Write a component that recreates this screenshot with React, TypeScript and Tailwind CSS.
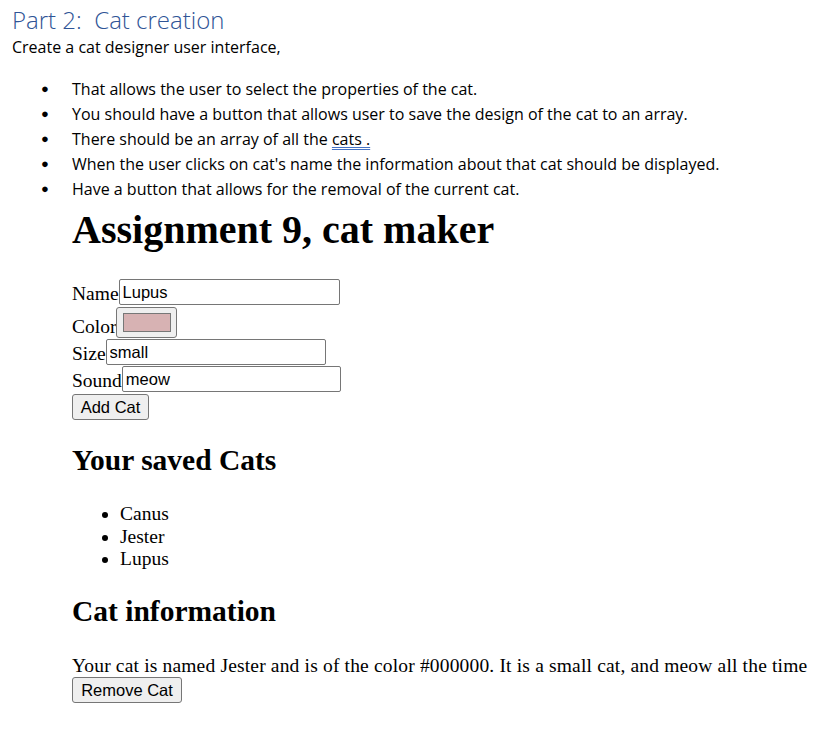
export default function App() {
  const bullets = [
    'That allows the user to select the properties of the cat.',
    'You should have a button that allows user to save the design of the cat to an array.',
    null,
    "When the user clicks on cat's name the information about that cat should be displayed.",
    'Have a button that allows for the removal of the current cat.',
  ]
  const cats = ['Canus', 'Jester', 'Lupus']

  const word = { fontFamily: '"Open Sans", "Noto Sans", sans-serif' }
  const serif = { fontFamily: '"Liberation Serif", "Times New Roman", serif' }
  const sans = { fontFamily: '"Liberation Sans", Arial, sans-serif' }

  return (
    <div className="min-h-screen w-[838px] bg-white text-black overflow-hidden">
      {/* document part */}
      <div style={word}>
        <h1 className="pl-[12px] pt-[5px] text-[24px] leading-[30px] font-light text-[#2f5496]">
          Part 2:&nbsp; Cat creation
        </h1>
        <p className="pl-[12px] text-[16px] leading-[24px]">Create a cat designer user interface,</p>
        <ul className="mt-[17px]">
          {bullets.map((b, i) => (
            <li key={i} className="flex items-center h-[25px] text-[16px]">
              <span className="w-[72px] pl-[41px] text-[13px]">●</span>
              {b ?? (
                <span>
                  There should be an array of all the{' '}
                  <span className="underline decoration-double decoration-[#4472c4] underline-offset-2">cats .</span>
                </span>
              )}
            </li>
          ))}
        </ul>
      </div>

      {/* browser part */}
      <div className="pl-[72px] mt-[6px]" style={serif}>
        <h1 className="text-[40px] leading-[46px] font-bold">Assignment 9, cat maker</h1>

        <div className="mt-[25px] text-[19.5px]">
          <div className="flex items-end h-[27px]">
            <span className="leading-[22px]">Name</span>
            <input
              readOnly
              value="Lupus"
              style={sans}
              className="w-[221px] h-[26px] border border-[#767676] rounded-[2px] px-[3px] text-[16.5px] outline-none"
            />
          </div>
          <div className="flex items-end h-[33px]">
            <span className="leading-[22px]">Color</span>
            <div className="w-[61px] h-[31px] bg-[#efefef] border border-[#767676] rounded-[3px] flex items-center justify-center">
              <div className="w-[48px] h-[19px] bg-[#d7b2b3] border border-[#777]" />
            </div>
          </div>
          <div className="flex items-end h-[27px]">
            <span className="leading-[22px]">Size</span>
            <input
              readOnly
              value="small"
              style={sans}
              className="w-[220px] h-[26px] border border-[#767676] rounded-[2px] px-[3px] text-[16.5px] outline-none"
            />
          </div>
          <div className="flex items-end h-[27px]">
            <span className="leading-[22px]">Sound</span>
            <input
              readOnly
              value="meow"
              style={sans}
              className="w-[219px] h-[26px] border border-[#767676] rounded-[2px] px-[3px] text-[16.5px] outline-none"
            />
          </div>
          <button
            style={sans}
            className="h-[26px] w-[77px] bg-[#efefef] border border-[#767676] rounded-[3px] text-[16.5px] leading-none"
          >
            Add Cat
          </button>
        </div>

        <h2 className="mt-[22px] text-[29.5px] leading-[34px] font-bold">Your saved Cats</h2>
        <ul className="mt-[26px] pl-[48px] list-disc text-[19.5px] leading-[22.5px]">
          {cats.map((c) => (
            <li key={c}>{c}</li>
          ))}
        </ul>

        <h2 className="mt-[23px] text-[29.5px] leading-[34px] font-bold">Cat information</h2>
        <p className="mt-[27px] text-[19.5px] leading-[22px] tracking-[0.17px] whitespace-nowrap">
          Your cat is named Jester and is of the color #000000. It is a small cat, and meow all the time
        </p>
        <button
          style={sans}
          className="h-[26px] w-[110px] bg-[#efefef] border border-[#767676] rounded-[3px] text-[16.5px] leading-none"
        >
          Remove Cat
        </button>
      </div>
    </div>
  )
}
